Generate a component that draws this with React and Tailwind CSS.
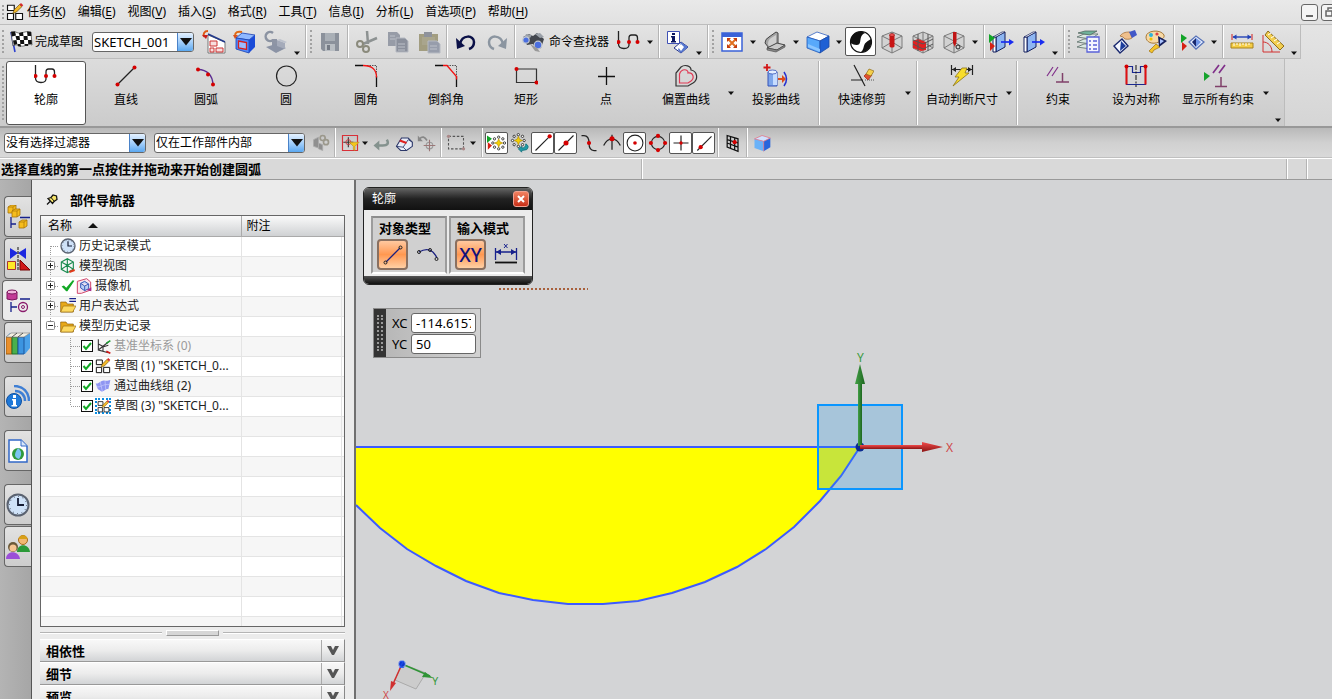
import React from "react";

/* ---------- icon primitives ---------- */

const Ico = ({ children, className = "size-6" }) => (
  <svg viewBox="0 0 24 24" className={className + " shrink-0"} fill="none" aria-hidden="true">
    {children}
  </svg>
);

const Dot = ({ x, y, r = 2, c = "#d40000" }) => <circle cx={x} cy={y} r={r} fill={c} />;

const Caret = () => <path d="M9 10.500h6l-3 3.500z" fill="#111" />;

const Flag = () => (
  <Ico>
    <path d="M2 2l4 20" stroke="#2a3fd0" strokeWidth="1.600" />
    <path d="M2 2c4-2 6 2 10 1s6-2 10-1l1 13c-4-2-7 2-11 1s-5-2-8 0z" fill="#fff" stroke="#222" strokeWidth=".6" />
    <path d="M2 2l4-.5 1 4-4 1zM10 3l4-1 .5 4h-4zM18 1.500l4 .5.3 4H18.500zM6.500 6l4-.3.5 4.300H7.500zM14.500 6h4l.3 4h-4zM4 10.500l3.500-.5.8 4-3.500 1zM11 10h4l.3 4h-4zM19 10h3.600l.3 4H19.200zM8.500 14l3-.2.5 3-3-.5zM15.500 14h3.500l.2 2-3.500-.2z" fill="#111" />
  </Ico>
);
const Orient = () => (
  <Ico>
    <path d="M6 5l17 7v11H6z" fill="#fff" stroke="#777" />
    <path d="M6 4l17 8" stroke="#223a8c" strokeWidth="1.500" />
    <path d="M8 11h7v5H8zM8 18h4v4H8zM14 18h7v4h-7z" stroke="#c33" fill="#f7dede" />
    <path d="M6 1C2 1 1 4 2 7" stroke="#e05a14" strokeWidth="2" />
    <path d="M0 5h6l-2 4z" fill="#c81e1e" />
  </Ico>
);
const BlueCube = () => (
  <Ico>
    <path d="M3 8l6-5 13 2-6 5z" fill="#8fb8ff" stroke="#1b3fae" strokeWidth=".8" />
    <path d="M3 8l13 2v13L3 19z" fill="#4f8bff" stroke="#1b3fae" strokeWidth=".8" />
    <path d="M16 10l6-5v12l-6 6z" fill="#1a4bd8" />
    <path d="M5.500 11l8 1.500v7l-8-1.500z" stroke="#d42020" strokeWidth="1.300" fill="#9bbcff" />
    <path d="M9 2C5 1 2 2 2 6" stroke="#e06a14" strokeWidth="2" />
    <path d="M0 5h5L2 9z" fill="#d8501e" />
  </Ico>
);
const GrayTool = () => (
  <Ico>
    <path d="M9 3a4.500 4.500 0 1 0 0 7" stroke="#8b93a2" strokeWidth="2.500" />
    <path d="M8 9h5v7H8z" fill="#8e95a5" />
    <path d="M2 17l10-3 10 4-10 5z" fill="#8b93a5" />
    <path d="M13 10l8 3v6l-8-3z" fill="#a5abba" />
    <path d="M13 10l3-1 7 3-2 1z" fill="#bcc1cc" />
  </Ico>
);
const Save = () => (
  <Ico>
    <path d="M3 3h18v18H5l-2-2z" fill="#8b919b" />
    <path d="M7 3h10v8H7z" fill="#a9afb6" />
    <path d="M7 14h10v7H7z" fill="#b9bec3" />
    <path d="M9 15h3v5H9z" fill="#757b85" />
  </Ico>
);
const Cut = () => (
  <Ico>
    <path d="M12 1l1 13M22 8L8 14" stroke="#8d9292" strokeWidth="2.500" />
    <circle cx="5" cy="14" r="3" stroke="#8a8a7c" strokeWidth="2" />
    <circle cx="11" cy="19" r="3" stroke="#8a8a7c" strokeWidth="2" />
  </Ico>
);
const Copy = () => (
  <Ico>
    <path d="M2 2h9l3 3v11H2z" fill="#979ca7" />
    <path d="M10 8h9l3 3v11H10z" fill="#8b909c" stroke="#b6bac2" />
    <path d="M4 6h5M4 9h5M12 14h7M12 17h7M12 20h7" stroke="#bdc1c9" />
  </Ico>
);
const Paste = () => (
  <Ico>
    <path d="M2 4h19v17H2z" fill="#a29d80" />
    <path d="M7 2h8v5H7z" fill="#8e929b" />
    <path d="M5 7h13v8H5z" fill="#a9a58d" />
    <path d="M11 11h9l3 3v9H11z" fill="#979dab" stroke="#b6bac2" />
    <path d="M13 16h7M13 19h7" stroke="#bdc1c9" />
  </Ico>
);
const Undo = () => (
  <Ico>
    <path d="M6 14C8 4 20 5 20 12c0 4-2 6-5 7" stroke="#0a1047" strokeWidth="2.500" />
    <path d="M2 8l1 11 8-3z" fill="#0a1047" />
  </Ico>
);
const Redo = () => (
  <Ico>
    <path d="M18 14C16 4 4 5 4 12c0 4 2 6 5 7" stroke="#8b95a0" strokeWidth="2.500" />
    <path d="M22 8l-1 11-8-3z" fill="#8b95a0" />
  </Ico>
);
const Binoculars = () => (
  <Ico>
    <path d="M2 7l6-3 4 2 4-3 7 6-3 9-5 2-3-6-6 1z" fill="#43474e" />
    <path d="M5 4l6 1-2 3-5-1zM14 4l5-1 4 4-4 1z" fill="#9aa0a8" />
    <circle cx="5" cy="10" r="3.200" fill="#4b6fe0" stroke="#c3c9d2" strokeWidth="1.200" />
    <circle cx="17" cy="15" r="3.800" fill="#4b6fe0" stroke="#c3c9d2" strokeWidth="1.200" />
    <path d="M9 14l5 7 5 1-3-4z" fill="#999" />
  </Ico>
);
const Profile = () => (
  <Ico>
    <path d="M1.500 1v13q0 4.500 5.500 4.500t5-4.500V8q0-3 2.500-3h3.500q2.500 0 2.500 3v4" stroke="#222" strokeWidth="1.300" />
    <Dot x="1.500" y="12" /><Dot x="12" y="12" /><Dot x="20.500" y="12" />
  </Ico>
);
const Info = () => (
  <Ico>
    <path d="M1.500 1.500h12v12h-12z" fill="#fff" stroke="#3f51b5" />
    <path d="M6 3h3v2H6zM5 6h4v5h1v1.500H5V11h1V7.500H5z" fill="#0b1660" />
    <path d="M8 18l7-6 7 5-7 6z" fill="#fff" stroke="#26348c" />
    <path d="M15 12l7 5-7 6-3-3z" fill="#5677cf" />
    <path d="M12 17l3-3 3 3-3 4z" fill="#fff" />
  </Ico>
);
const Fit = () => (
  <Ico>
    <path d="M2 3h20v18H2z" fill="#fff" stroke="#3a62d8" strokeWidth="1.500" />
    <path d="M2 3h20v4H2z" fill="#3a62d8" />
    <path d="M8 9l8 8M16 9l-8 8" stroke="#e07020" strokeWidth="2" />
    <path d="M7 8h4l-4 4zM17 8v4l-4-4zM7 18v-4l4 4zM17 18h-4l4-4z" fill="#c43c10" />
  </Ico>
);
const Plane = () => (
  <Ico>
    <path d="M2 13q0-4 4-6l7-5 2 1v11l-9 4z" fill="#a3a3a3" stroke="#444" />
    <path d="M5 14q0-4 3-6l5-3v9l-7 3z" fill="#cfcfcf" />
    <path d="M4 18l10-5 8 2-8 5z" fill="#c9c9c9" stroke="#444" />
    <path d="M4 18v2l9 2 9-5v-2l-8 5z" fill="#888" stroke="#444" strokeWidth=".6" />
  </Ico>
);
const Cube = () => (
  <Ico>
    <path d="M1 7l10-5 12 4-9 5z" fill="#fff" stroke="#3060c0" strokeWidth=".8" />
    <path d="M1 7l13 4v12L1 18z" fill="#58a9fb" stroke="#2458b8" strokeWidth=".8" />
    <path d="M14 11l9-5v11l-9 6z" fill="#1f60d4" stroke="#1c4aa4" strokeWidth=".8" />
    <path d="M2 14l12 5v3L2 17z" fill="#8cc6ff" />
  </Ico>
);
const Shade = () => (
  <Ico>
    <circle cx="12" cy="12" r="10.500" fill="#fff" stroke="#111" strokeWidth="1.200" />
    <path d="M13 1.500C5 1 1 7 1.500 13c2 1 4 2 6 2 5 0 3-5 5-9 1-2 3-3 4-3z" fill="#111" />
    <path d="M22 9c2 8-4 13.500-11 13.500 4-2 3-6 5-9 1.500-2 4-3 6-4.500z" fill="#111" />
  </Ico>
);
const Wire = ({ kind }) => (
  <Ico>
    <path d="M2 6l10-4 10 4v12l-10 5-10-5z" fill="#d2d2d2" stroke="#7c7c7c" />
    <path d="M2 6l10 5 10-5M12 11v12M12 2v9M2 18l10-6 10 6" stroke="#777" />
    {kind === "rod" && (
      <>
        <path d="M9.500 5v11c0 2 5 2 5 0V5z" fill="#c81414" />
        <ellipse cx="12" cy="5" rx="2.500" ry="1.500" fill="#f05050" stroke="#8e0c0c" strokeWidth=".6" />
      </>
    )}
    {kind === "grid" && (
      <>
        <path d="M2 11l5-2 8 3v8l-5 1-8-3z" fill="#e22020" />
        <path d="M7 4v17M17 4v17M2 10l10 4 10-5M2 14l10 5 10-5" stroke="#555" />
      </>
    )}
    {kind === "pin" && (
      <>
        <path d="M11 2h3.500v10l-1.500 5-2-4z" fill="#c01414" />
        <circle cx="16" cy="17" r="2" stroke="#222" />
      </>
    )}
  </Ico>
);
const Tris = ({ x = 0, y = 0 }) => (
  <>
    <path d={`M${x} ${y}l6 4-6 5z`} fill="#12a428" />
    <path d={`M${x + 1} ${y + 8}l5 4-5 5z`} fill="#d62015" />
  </>
);
const Door = ({ tris }) => (
  <Ico className="h-6 w-7">
    <path d="M5 7l9-5v15l-9 5z" fill="#8eb6f2" stroke="#111d5c" />
    <path d="M5 7H2v15h3z" fill="#fff" stroke="#111d5c" />
    <path d="M5 7l9-5h-3L2 7z" fill="#fff" stroke="#111d5c" strokeWidth=".7" />
    <path d="M10 12h10" stroke="#1a2df0" strokeWidth="1.700" />
    <path d="M18 9l5 3-5 3.500z" fill="#1a2df0" />
    {tris && <Tris x={-2} y={4} />}
  </Ico>
);
const Layers = () => (
  <Ico>
    <path d="M1 17l7-3h14l-7 5zM1 12l7-3h14l-7 5zM1 7l7-3h14l-7 5z" fill="#dbe8e2" stroke="#5b6d68" strokeWidth=".8" />
    <path d="M2 3l7-2h12l-7 4z" fill="#70b29a" stroke="#4a5b56" strokeWidth=".7" />
    <path d="M11 7h12v15H11z" fill="#f4f5ff" stroke="#5a62d8" strokeWidth="1.300" />
    <path d="M13 11h2M17 11h4M13 15h2M17 15h4M13 19h2M17 19h4" stroke="#5a62d8" strokeWidth="1.500" />
  </Ico>
);
const Hand = () => (
  <Ico>
    <path d="M1 16l8-7 6 7-8 7z" fill="#f4f7ff" stroke="#19286f" strokeWidth="1.400" />
    <path d="M8 11l5 5-6 5z" fill="#1b3d9c" />
    <path d="M7 6c3-4 7-4 10-4l2 6c-3 2-6 1-7 1l-2-2z" fill="#f0c08c" stroke="#a8743c" strokeWidth=".8" />
    <path d="M16 2l6-2 2 5-5 3z" fill="#4258c8" />
  </Ico>
);
const Palette = () => (
  <Ico>
    <path d="M2 7C2 0 17-1 20 5c1 4-4 4-5 7-7 3-13 0-13-5z" fill="#f7d9a6" stroke="#a87b3a" />
    <Dot x="7" y="5" c="#2fb2d8" /><Dot x="13" y="4" c="#e04040" r={1.600} /><Dot x="7" y="9" c="#f0c000" r={1.600} />
    <path d="M12 14l4 3-6 3-2 3-3-2 3-3z" fill="#f3c42a" stroke="#a87b1a" strokeWidth=".8" />
    <path d="M14 6l9 5-8 6z" fill="#16205e" />
    <path d="M16 9l4 2-4 3z" fill="#aac3ff" />
  </Ico>
);
const PlayDiamond = () => (
  <Ico>
    <Tris x={0} y={4} />
    <path d="M8 12l7-6 8 6-8 7z" fill="#e6eeff" stroke="#5873b8" strokeWidth="1.300" />
    <path d="M15 8v9l-4-5z" fill="#18286e" />
    <path d="M15 8l5 4-5 5z" fill="#6f95e8" />
  </Ico>
);
const Ruler = () => (
  <Ico>
    <path d="M1 13h22v5H1z" fill="#f4cd45" stroke="#a8821c" />
    <path d="M4 13v3M7 13v2M10 13v3M13 13v2M16 13v3M19 13v2" stroke="#fff" />
    <path d="M2 4v6M22 4v6" stroke="#d02020" />
    <path d="M3 7h18" stroke="#2343b8" strokeWidth="1.400" />
    <path d="M2.500 7l4-2.500v5zM21.500 7l-4-2.500v5z" fill="#2343b8" />
  </Ico>
);
const Angle = () => (
  <Ico>
    <path d="M2 5v17h17M2 12c5 0 9 4 9 10" stroke="#d23030" />
    <path d="M7 1l16 15-4 4L4 5z" fill="#f2ce50" stroke="#8e6d1a" />
    <path d="M7 5l3-2M10 8l3-2M13 11l3-2M16 14l3-2" stroke="#fff" />
  </Ico>
);

/* ribbon icons */
const Line = ({ c = "#222" }) => (
  <Ico><path d="M3.500 20.500L20.500 3.500" stroke={c} strokeWidth="1.200" /><Dot x="3.500" y="20.500" /><Dot x="20.500" y="3.500" /></Ico>
);
const Arc = () => (
  <Ico><path d="M4 5.500Q18 6 19 20.500" stroke="#5b2c91" strokeWidth="1.300" /><Dot x="4" y="5.500" /><Dot x="14" y="10.500" /><Dot x="19" y="20.500" /></Ico>
);
const CircleI = () => <Ico><circle cx="12.500" cy="12" r="10" stroke="#222" strokeWidth="1.200" /></Ico>;
const Fillet = () => (
  <Ico>
    <path d="M13 1.500h9.500v10" stroke="#555" strokeDasharray="1.500 1" />
    <path d="M1 1.500h8M22.500 12v11" stroke="#111" strokeWidth="1.300" />
    <path d="M9 1.500q13.500 0 13.500 12" stroke="#f21313" strokeWidth="1.300" />
  </Ico>
);
const Chamfer = () => (
  <Ico>
    <path d="M13 1.500h9.500v10" stroke="#555" strokeDasharray="1.500 1" />
    <path d="M1 1.500h8M22.500 12v11" stroke="#111" strokeWidth="1.300" />
    <path d="M9 1.500h4l9.500 11v3" stroke="#f21313" strokeWidth="1.300" />
  </Ico>
);
const RectI = () => (
  <Ico><path d="M2.500 5h20v13.500h-20z" stroke="#333" strokeWidth="1.200" /><Dot x="2.500" y="5" /><Dot x="22.500" y="18.500" /></Ico>
);
const Point = () => <Ico><path d="M12.500 3v18M4 12.500h17" stroke="#111" strokeWidth="1.300" /></Ico>;
const OffsetI = () => (
  <Ico>
    <path d="M2 22V9l5-6c4-3 10-1 10 3 6 1 8 9 2 13l-5 3z" stroke="#333" strokeWidth="1.200" />
    <path d="M5.500 19V10c2-6 9-5 8.500-1 5-1 7 5 3 8l-3 2z" stroke="#e03a55" strokeWidth="1.200" />
  </Ico>
);
const Project = () => (
  <Ico className="h-6 w-7">
    <path d="M3 0v7M-.5 3.500h7" stroke="#d21616" strokeWidth="1.800" />
    <path d="M4 8h9v14H4z" fill="#7ea6ea" stroke="#3553b8" />
    <path d="M9 7h4v14H9z" fill="#c6dcff" />
    <ellipse cx="8.500" cy="8" rx="4.500" ry="2" fill="#e4eeff" stroke="#3553b8" strokeWidth=".8" />
    <path d="M14 14h4v-3l4 4-4 4v-3h-4z" fill="#e04a1a" />
    <path d="M20 8q5 7 0 14" stroke="#2530d0" strokeWidth="1.500" />
  </Ico>
);
const Trim = () => (
  <Ico>
    <path d="M4 1l11 21M1 16h12" stroke="#222" strokeWidth="1.200" />
    <path d="M15 16h9" stroke="#555" strokeDasharray="1 1" />
    <path d="M14 12l4-4 4 3-4 5z" fill="#e05030" stroke="#a02010" strokeWidth=".7" />
    <path d="M16 10l3-5 5 2-3 5z" fill="#f4cf4c" stroke="#8e6d1a" strokeWidth=".7" />
  </Ico>
);
const Bolt = () => (
  <Ico>
    <path d="M1.500 1v10M22.500 1v10M2 5.500h20" stroke="#222" strokeWidth="1.200" />
    <path d="M2 5.500L6 3v5zM22 5.500L18 3v5z" fill="#222" />
    <path d="M12 4h5l-2 5h4L3 22l6-9H5z" fill="#f8dd2c" stroke="#8d7314" strokeWidth=".8" />
  </Ico>
);
const Constraint = () => (
  <Ico className="h-6 w-7">
    <path d="M1 12L7 3M6 12l6-9" stroke="#80308a" strokeWidth="1.200" />
    <path d="M16.500 9v9M10 18h13" stroke="#80406a" strokeWidth="1.500" />
  </Ico>
);
const Symmetric = () => (
  <Ico>
    <path d="M2.500 2.500v18h19v-18h-5v6h-8v-6z" stroke="#1a2890" strokeWidth="1.200" />
    <path d="M2.500 2.500v18M21.500 2.500v18" stroke="#e01010" strokeWidth="2" />
    <path d="M12 1v22" stroke="#111" strokeDasharray="5 1.500 2 1.500" />
    <Dot x="2.500" y="2.500" /><Dot x="21.500" y="2.500" />
  </Ico>
);
const ShowAll = () => (
  <Ico className="h-6 w-8">
    <path d="M-2 8l6 4-6 5z" fill="#16a32c" />
    <path d="M7 9l6-8M13 9l6-8" stroke="#80308a" strokeWidth="1.700" />
    <path d="M15 13v9M9 22.500h12" stroke="#80406a" strokeWidth="1.500" />
  </Ico>
);

/* selection bar icons */
const Links = () => (
  <Ico className="size-5">
    <path d="M3 8l6-3v13l-6-2zM9 12l5 2v7l-5-2z" fill="#8f8f8f" stroke="#aaa" />
    <circle cx="14" cy="6" r="3" stroke="#9b988c" strokeWidth="2" /><circle cx="18" cy="11" r="3" stroke="#9b988c" strokeWidth="2" />
  </Ico>
);
const SelFilter = () => (
  <Ico className="size-5">
    <path d="M3 3h18v18H3z" stroke="#d83038" strokeWidth="1.400" />
    <path d="M10 5v12M4 11h12" stroke="#333" strokeWidth="1.300" /><circle cx="10" cy="11" r="3" stroke="#d83038" />
    <path d="M11 11h12l-5 5v5l-2-1v-4z" fill="#f3c51c" stroke="#a8821c" strokeWidth=".6" />
  </Ico>
);
const Back = () => <Ico className="size-5"><path d="M19 8q4 7-5 7H9" stroke="#84928e" strokeWidth="3" /><path d="M10 9v12l-7-6z" fill="#84928e" /></Ico>;
const Eraser = () => (
  <Ico className="size-5">
    <path d="M3 16l6-10h8l5 5v5l-7 5H8z" fill="#e8ecf8" stroke="#2a3668" strokeWidth="1.300" /><path d="M3 16l8 1 6-9M11 17l4 4M17 8l5 3" stroke="#2a3668" /><path d="M7 9l8 3" stroke="#e02020" strokeWidth="2.500" />
  </Ico>
);
const RotPoint = () => (
  <Ico className="size-5"><path d="M3 7q5-5 9 2" stroke="#888" strokeWidth="2" /><path d="M1 3v7h6z" fill="#888" /><circle cx="15" cy="15" r="4" stroke="#999" strokeWidth="1.300" /><path d="M15 8v14M8 15h14" stroke="#9b7777" strokeWidth="1.300" /></Ico>
);
const Marquee = () => (
  <Ico className="size-5"><path d="M3 4h18v15H3z" stroke="#555" strokeWidth="1.300" strokeDasharray="3 2" /><Dot x="3" y="4" c="#a88" /><Dot x="21" y="19" c="#a88" /></Ico>
);
const SnapAll = ({ arrow }) => {
  const x = arrow ? 10 : 14;
  const y = arrow ? 9 : 12;
  return (
    <Ico className="size-5">
      {[[0, -7], [7, 0], [0, 7], [-7, 0], [5, -5], [5, 5], [-5, 5], [-5, -5]].map(([dx, dy]) => (
        <circle key={dx + "," + dy} cx={x + dx} cy={y + dy} r="1.400" fill="#fff" stroke="#222" />
      ))}
      <path d={`M${x} ${y - 5}l1.500 3.500L${x + 5} ${y}l-3.500 1.500L${x} ${y + 5}l-1.500-3.500L${x - 5} ${y}l3.500-1.500z`} fill="#f5d000" stroke="#a88400" strokeWidth=".7" />
      {arrow ? <path d="M19 13q5 3 1 7l-6 1v2l-4-4 4-3v2q5 0 5-5z" fill="#1f9ba8" stroke="#13727c" /> : <Tris x={0} y={3} />}
    </Ico>
  );
};
const Mid = () => <Ico className="size-5"><path d="M3 21L21 3" stroke="#222" strokeWidth="1.300" /><Dot x="12" y="12" r={3} /></Ico>;
const EndP = () => <Ico className="size-5"><path d="M3 21L20 4" stroke="#222" strokeWidth="1.300" /><Dot x="20" y="4" r={2.500} /></Ico>;
const OnCurve = () => <Ico className="size-5"><path d="M4 21L21 4" stroke="#222" strokeWidth="1.300" /><Dot x="8" y="17" r={2.500} /></Ico>;
const Pole = () => <Ico className="size-5"><path d="M3 3h3q6 0 6 9t6 9h3" stroke="#222" strokeWidth="1.500" /><Dot x="12" y="12" r={2.500} /></Ico>;
const Inter = () => <Ico className="size-5"><path d="M2 15q4-8 10-8t10 8M12 2v18" stroke="#222" strokeWidth="1.500" /><Dot x="12" y="7" r={3} /></Ico>;
const Center = () => <Ico className="size-5"><circle cx="12" cy="12" r="9.500" stroke="#222" strokeWidth="1.300" /><Dot x="12" y="12" r={2.200} /></Ico>;
const Quad = () => <Ico className="size-5"><circle cx="12" cy="12" r="8" stroke="#222" strokeWidth="1.300" /><Dot x="12" y="3.500" r={2.500} /><Dot x="12" y="20.500" r={2.500} /><Dot x="3.500" y="12" r={2.500} /><Dot x="20.500" y="12" r={2.500} /></Ico>;
const Exist = () => <Ico className="size-5"><path d="M12 3v18M3 12h18" stroke="#222" strokeWidth="1.400" /><Dot x="12" y="12" /></Ico>;
const GridI = () => <Ico className="size-5"><path d="M5 3l13 4v15L5 17zM9 4v15M14 6v15M5 8l13 4M5 12l13 5" stroke="#111" strokeWidth="1.500" /><Dot x="14" y="11" r={2.500} /></Ico>;
const Cube2 = () => (
  <Ico className="size-5">
    <path d="M3 7l9-4 10 3-8 4z" fill="#cfe2ff" /><path d="M3 7l11 3v12L3 18z" fill="#6ab2f8" /><path d="M14 10l8-4v11l-8 5z" fill="#2765dc" /><path d="M3 7l11 3 8-4M14 10v12M3 7l9-4 10 3" stroke="#e27b8c" />
  </Ico>
);

/* ---------- layout pieces ---------- */

const Sep = () => <span className="mx-[2px] box-content w-px shrink-0 self-stretch border-r border-white bg-[#b4b4b4]" />;
const Grip = () => <span className="my-[5px] ml-px w-1 shrink-0 self-stretch border-l-2 border-dotted border-[#a2a2a2]" />;
const Drop = ({ low, label = "更多", w = "w-3" }) => (
  <button aria-label={label} className={"flex shrink-0 justify-center " + w + (low ? " self-end pb-px" : " self-center")}>
    <svg viewBox="8 8 8 8" className="size-2 shrink-0" aria-hidden="true"><Caret /></svg>
  </button>
);
const Tool = ({ label, on, children }) => (
  <button
    aria-label={label}
    className={
      "flex w-[31px] shrink-0 items-center justify-center self-stretch " +
      (on ? "my-[2px] rounded-[2px] border border-[#555] bg-white" : "")
    }
  >
    {children}
  </button>
);
const Snap = ({ label, on, children }) => (
  <button
    aria-label={label}
    className={"flex h-[22px] w-[23px] shrink-0 items-center justify-center " + (on ? "rounded-[2px] border border-[#555] bg-white" : "")}
  >
    {children}
  </button>
);
const Pick = ({ label, value, className }) => (
  <span className={"flex shrink-0 overflow-hidden rounded-[3px] border border-[#666] bg-white " + className}>
    <select aria-label={label} defaultValue={value} className="min-w-0 flex-1 appearance-none bg-transparent pl-px outline-none">
      <option>{value}</option>
    </select>
    <span className="flex w-4 items-center justify-center border-l border-[#4a82c8] bg-linear-to-b from-[#e4f1ff] via-[#a6d0fa] to-[#5aa8f0]">
      <svg viewBox="0 0 12 8" className="h-2 w-3" aria-hidden="true"><path d="M0 0h12L6 7.500z" fill="#111" /></svg>
    </span>
  </span>
);
const Big = ({ label, on, w = "w-20", children }) => (
  <button
    className={
      "flex shrink-0 flex-col items-center gap-1 whitespace-nowrap pt-[2px] " + w +
      (on ? " rounded-[3px] border border-[#555] bg-white" : " border border-transparent")
    }
  >
    {children}
    <span>{label}</span>
  </button>
);

const menus = [
  ["任务", "K"], ["编辑", "E"], ["视图", "V"], ["插入", "S"], ["格式", "R"],
  ["工具", "T"], ["信息", "I"], ["分析", "L"], ["首选项", "P"], ["帮助", "H"],
];

function SketchPencil({ className }) {
  return (
    <Ico className={className}>
      <path d="M2 3h9v7H2zM2 14h8v8H2zM13 14h9v8h-9z" stroke="#111" strokeWidth="1.500" fill="#fff" />
      <path d="M9 14l2-5 7-7 3 3-7 7z" fill="#f4b92a" stroke="#553c00" strokeWidth=".8" />
      <path d="M18 2l2-2 3 3-2 2z" fill="#d62a2a" />
    </Ico>
  );
}

const MenuBar = () => (
  <nav className="flex h-6 items-center bg-linear-to-b from-[#e9e9e9] to-[#e1e1e1] pl-px">
    <Grip />
    <SketchPencil className="size-[18px]" />
    <ul className="ml-[3px] flex flex-1 gap-3">
      {menus.map(([t, k]) => (
        <li key={k}>
          <button className="whitespace-nowrap">
            {t}(<u className="underline-offset-2">{k}</u>)
          </button>
        </li>
      ))}
    </ul>
    <div className="-mr-[6px] flex gap-[3px]">
      <button aria-label="最小化" className="flex size-[17px] items-end justify-center rounded-[3px] border border-[#666] bg-[#f4f4f4] pb-[3px]">
        <span className="h-[2px] w-[7px] bg-[#666]" />
      </button>
      <button aria-label="还原" className="flex size-[17px] items-center justify-center rounded-[3px] border border-[#666] bg-[#f4f4f4]">
        <svg viewBox="0 0 12 12" className="size-3" fill="none" aria-hidden="true"><path d="M4 4V2h7v5H9M2 5h6v5H2z" stroke="#666" strokeWidth="1.500" /></svg>
      </button>
    </div>
  </nav>
);

const Toolbar = () => (
  <div className="flex h-[35px] border-t border-[#bdbdbd]">
    <div className="flex border-r border-b border-[#bcbcbc] bg-linear-to-b from-[#e4e4e4] to-[#d6d6d6] pl-px">
      <Grip />
      <button className="mr-[9px] ml-[3px] flex shrink-0 items-center gap-[2px] whitespace-nowrap"><Flag />完成草图</button>
      <Pick label="草图名" value="SKETCH_001" className="mr-1 h-5 w-[102px] self-center text-[13px]" />
      <Tool label="定向到草图"><Orient /></Tool>
      <Tool label="定向到模型"><BlueCube /></Tool>
      <Tool label="重新附着"><GrayTool /></Tool>
      <Drop low /><Sep /><Grip />
      <Tool label="保存"><Save /></Tool><Sep />
      <Tool label="剪切"><Cut /></Tool>
      <Tool label="复制"><Copy /></Tool>
      <Tool label="粘贴"><Paste /></Tool><Sep />
      <Tool label="撤消"><Undo /></Tool>
      <Tool label="重做"><Redo /></Tool><Sep />
      <button className="mr-1 ml-[3px] flex shrink-0 items-center gap-1 whitespace-nowrap"><Binoculars />命令查找器</button>
      <Tool label="轮廓"><Profile /></Tool>
      <Drop /><Sep />
      <Tool label="信息"><Info /></Tool>
      <Drop low /><Sep /><Grip />
      <Tool label="适合窗口"><Fit /></Tool><Drop />
      <Tool label="定向视图"><Plane /></Tool><Drop />
      <Tool label="着色"><Cube /></Tool><Drop />
      <Tool label="渲染样式" on><Shade /></Tool>
      <Tool label="编辑截面"><Wire kind="rod" /></Tool>
      <Tool label="工作截面"><Wire kind="grid" /></Tool>
      <Tool label="剪切截面"><Wire kind="pin" /></Tool>
      <Drop /><Sep />
      <Tool label="显示和隐藏"><Door tris /></Tool>
      <Tool label="隐藏"><Door /></Tool>
      <Drop low /><Sep /><Grip />
      <Tool label="图层设置"><Layers /></Tool><Sep />
      <Tool label="编辑对象显示"><Hand /></Tool>
      <Tool label="调色板"><Palette /></Tool><Sep />
      <Tool label="动画"><PlayDiamond /></Tool>
      <Drop /><Sep />
      <Tool label="测量距离"><Ruler /></Tool>
      <Tool label="测量角度"><Angle /></Tool>
      <Drop low />
    </div>
  </div>
);

const Ribbon = () => (
  <div className="flex h-[69px] border-b-2 border-[#989898]">
    <div className="flex border-r border-[#bcbcbc] bg-linear-to-b from-[#dcdcdc] to-[#cbcbcb] pt-[2px] pb-px pl-px">
      <Grip />
      <Big label="轮廓" on><Profile /></Big>
      <Big label="直线"><Line /></Big>
      <Big label="圆弧"><Arc /></Big>
      <Big label="圆"><CircleI /></Big>
      <Big label="圆角"><Fillet /></Big>
      <Big label="倒斜角"><Chamfer /></Big>
      <Big label="矩形"><RectI /></Big>
      <Big label="点"><Point /></Big>
      <Big label="偏置曲线"><OffsetI /></Big>
      <Drop w="w-[10px]" />
      <Big label="投影曲线"><Project /></Big><Sep />
      <Big label="快速修剪"><Trim /></Big><Drop /><Sep />
      <Big label="自动判断尺寸" w="w-21"><Bolt /></Big><Drop w="w-[10px]" /><Sep />
      <Big label="约束" w="w-19"><Constraint /></Big>
      <Big label="设为对称"><Symmetric /></Big>
      <Big label="显示所有约束" w="w-21"><ShowAll /></Big>
      <Drop />
      <Drop low />
    </div>
  </div>
);

const SelectionBar = () => (
  <div className="flex h-[30px] items-center border-b border-[#c0c0c0] bg-linear-to-b from-[#b9b9b9] via-[#d0d0d0] to-[#d9d9d9] pl-1">
    <Pick label="类型过滤器" value="没有选择过滤器" className="mr-2 h-5 w-[142px]" />
    <Pick label="选择范围" value="仅在工作部件内部" className="mr-1 h-5 w-[151px]" />
    <Snap label="选择链"><Links /></Snap><Sep />
    <Snap label="选择过滤"><SelFilter /></Snap><Drop w="w-2" />
    <Snap label="返回"><Back /></Snap>
    <Snap label="全不选"><Eraser /></Snap>
    <Snap label="旋转点"><RotPoint /></Snap><Sep />
    <Snap label="矩形选择"><Marquee /></Snap><Drop /><Sep />
    <Snap label="启用捕捉点" on><SnapAll /></Snap>
    <Snap label="清除捕捉点"><SnapAll arrow /></Snap>
    <Snap label="终点" on><EndP /></Snap>
    <Snap label="中点" on><Mid /></Snap>
    <Snap label="控制点"><Pole /></Snap>
    <Snap label="交点"><Inter /></Snap>
    <Snap label="圆弧中心" on><Center /></Snap>
    <Snap label="象限点"><Quad /></Snap>
    <Snap label="现有点" on><Exist /></Snap>
    <Snap label="点在曲线上" on><OnCurve /></Snap><Sep />
    <Snap label="栅格点"><GridI /></Snap><Sep />
    <Snap label="着色体"><Cube2 /></Snap>
  </div>
);

const StatusLine = () => (
  <div className="flex h-[22px] border-t border-b border-t-white border-b-[#999] bg-[#d9d9d9]">
    <p className="w-[642px] truncate border-r border-[#b4b4b4] pl-px text-[13px] leading-5 font-bold">选择直线的第一点按住并拖动来开始创建圆弧</p>
    <span className="flex-1 border-r border-l border-l-white border-r-[#b4b4b4]" />
    <span className="w-5 border-r border-l border-l-white border-r-[#b4b4b4]" />
    <span className="w-[25px] border-l border-white" />
  </div>
);

/* resource bar */
const Box3 = ({ x, y }) => (
  <>
    <path d={`M${x} ${y + 2}l3-2h5v6l-3 2h-5z`} fill="#f6bd1d" stroke="#a87408" strokeWidth=".8" />
    <path d={`M${x} ${y + 2}h5l3-2M${x + 5} ${y + 2}v6`} stroke="#a87408" strokeWidth=".7" />
  </>
);
const ClockFace = () => (
  <>
    <circle cx="12" cy="12" r="10.500" fill="#cfe2f8" stroke="#5a6270" strokeWidth="2" />
    <circle cx="12" cy="12" r="8.500" stroke="#303848" strokeDasharray=".8 3.650" />
    <path d="M12 5v7h6" stroke="#141c34" strokeWidth="1.800" />
  </>
);
const tabs = [
  ["装配导航器", <><Box3 x={2} y={0} /><Box3 x={6} y={4} /><path d="M5 12v11M5 19h5M14 12.500h10" stroke="#16208c" strokeWidth="1.300" /><Box3 x={13} y={15} /></>],
  ["约束导航器", <><path d="M4 1l8 5-8 6zM20 1l-8 5 8 6z" fill="#1c28e0" /><path d="M12 0v24" stroke="#111" strokeDasharray="3 1" /><path d="M1.500 14.500h8v8h-8z" fill="#ffe926" stroke="#a33" /><path d="M14 13v10h10z" fill="#d01818" stroke="#700" /></>],
  ["部件导航器", <><path d="M1 3v7q5 2 10 0V3z" fill="#c33b96" stroke="#7a165c" /><ellipse cx="6" cy="3" rx="5" ry="2" fill="#f0b8dc" stroke="#7a165c" /><path d="M5 13v10M5 18h6M14 10h10" stroke="#16208c" strokeWidth="1.300" /><circle cx="17" cy="18" r="4.500" stroke="#8a1c6c" strokeWidth="1.300" /><circle cx="17" cy="18" r="1.500" stroke="#8a1c6c" /></>],
  ["重用库", <><path d="M0 6l4-4h20v15l-5 6H0z" fill="#4aa0e8" /><path d="M0 6h6v17H0z" fill="#e98f2c" stroke="#9c5a0c" /><path d="M6 6h6v17H6z" fill="#49b04c" stroke="#22702a" /><path d="M12 6h6v17h-6z" fill="#3c94e0" stroke="#1c569c" /><path d="M0 6l5-4h19l-6 4z" fill="#f3efe2" stroke="#888" strokeWidth=".7" /><path d="M6 6l5-4M12 6l5-4" stroke="#555" /></>],
  ["浏览器", <><path d="M8 1c9 0 15 6 15 15M9 6c6 0 10 4 10 10" stroke="#3f7fd4" strokeWidth="2.500" /><circle cx="8" cy="16" r="7.500" fill="#1e78d8" stroke="#1050a0" /><path d="M7 10h3v3H7zM6 14h4v6h1v1.500H5.500V20H7v-4.500H6z" fill="#fff" /></>],
  ["网页", <><path d="M3 1h12l6 6v16H3z" fill="#fff" stroke="#3268c8" strokeWidth="1.500" /><path d="M15 1v6h6" fill="#d7e6fa" stroke="#3268c8" /><circle cx="12" cy="15" r="6" fill="#2f9a3c" /><path d="M12 9c4 3 4 7 1 11-4-1-6-4-1-11z" fill="#7cc4f2" /></>],
  ["历史记录", <ClockFace />],
  ["角色", <><circle cx="17" cy="5" r="4.500" fill="#f2b872" stroke="#a86c18" /><path d="M12.500 4c1-5 8-5 9 0z" fill="#d8a018" /><path d="M11 17c0-9 12-9 13 0z" fill="#2b9a38" /><circle cx="7" cy="12" r="5" fill="#6b5a3a" /><circle cx="7" cy="13" r="3.500" fill="#f6c592" /><path d="M0 24c0-9 13-9 14 0z" fill="#9b4fd8" /></>],
];

const ResourceBar = () => (
  <aside className="flex w-8 shrink-0 flex-col gap-px border-r border-[#555] bg-linear-to-r from-[#b4b4b4] to-[#a6a6a6] pt-4 pl-1">
    {tabs.map(([name, art], i) => (
      <button
        key={name}
        aria-label={name}
        className={
          "flex h-[41px] shrink-0 items-center justify-center rounded-l-[4px] border border-r-0 border-[#666] " +
          (i === 2 ? "-mr-px -ml-[2px] bg-[#ebebeb]" : "bg-linear-to-b from-[#e2e2e2] to-[#cdcdcd]") +
          (i > 3 && i < 7 ? " mt-3" : "")
        }
      >
        <Ico>{art}</Ico>
      </button>
    ))}
  </aside>
);

/* part navigator */
const Gutter = ({ box, first, last }) => (
  <svg viewBox="0 0 19 20" className="h-5 w-[19px] shrink-0" fill="none" aria-hidden="true">
    <path d={`M9.500 ${first ? 10 : 0}V${last ? 10 : 20}M10 10.500h8`} stroke="#999" strokeDasharray="1 1" />
    {box && (
      <>
        <rect x="5.500" y="5.500" width="8" height="8" rx="1" fill="#fff" stroke="#888" />
        <path d={box === "+" ? "M7 9.500h5M9.500 7v5" : "M7 9.500h5"} stroke="#222" />
      </>
    )}
  </svg>
);
const ChildGutter = ({ last }) => (
  <svg viewBox="0 0 40 20" className="h-5 w-10 shrink-0" fill="none" aria-hidden="true">
    <path d={`M29.500 0V${last ? 10 : 20}M30 10.500h9`} stroke="#999" strokeDasharray="1 1" />
  </svg>
);
const Folder = ({ eq }) => (
  <Ico className="size-4">
    <path d="M1 6h8l2 3h9v12H1z" fill="#e8a818" stroke="#8a5c08" />
    <path d="M5 12h19l-5 9H1z" fill="#fcd860" stroke="#9a6c10" />
    {eq && <path d="M14 1h10M14 5h10" stroke="#16208c" strokeWidth="1.800" />}
  </Ico>
);
const ViewI = () => <Ico className="size-4"><path d="M2 6l9-5 9 5v11l-9 5-9-5zM2 6l9 5 9-5M11 1v21M2 17l9-6 9 6" stroke="#1a8c50" strokeWidth="1.700" /><path d="M14 21l8-3" stroke="#e03a1a" strokeWidth="3" /></Ico>;
const CheckI = () => <Ico className="mx-px size-[14px]"><path d="M1 13l4-2 4 4L20 2l3 1-12 18H9z" fill="#12a825" /></Ico>;
const CamI = () => <Ico className="size-4"><path d="M2 5l14-4 6 5v12L8 23H2z" fill="#fbe6ee" stroke="#d0486c" strokeWidth="1.500" /><path d="M7 8l6-3 6 4v7l-6 3-6-4zM7 8l6 4 6-3M13 12v7" stroke="#3b5bb8" strokeWidth="1.500" fill="#bcd0f5" /><path d="M16 18l7-4v6z" fill="#a82c8c" /></Ico>;
const CsysI = () => <Ico className="size-4"><path d="M5 2v16l15 4M5 18L20 6M5 9l8 4 7-2M12 13v7" stroke="#333" strokeWidth="1.600" /><path d="M17 8l6-4" stroke="#1a9c30" strokeWidth="2.500" /><path d="M17 20l6 3" stroke="#d01818" strokeWidth="2.500" /></Ico>;
const SweepI = () => <Ico className="size-4"><path d="M1 8c5 2 8-6 14-4 4 1 5-1 8-1l-3 14c-5-2-6 5-11 3-3-3-4-2-5-4z" fill="#8f96f2" /><path d="M8 6l3 14M15 4l1 13M2 13c7 2 10-5 20-3" stroke="#c9cdfd" /></Ico>;
const ActiveSketch = () => (
  <span className="flex size-4 shrink-0 items-center justify-center border-2 border-dotted border-[#0a8ce0] bg-white"><SketchPencil className="size-[13px]" /></span>
);

const tree = [
  { t: "历史记录模式", g: <Gutter first />, i: <Ico className="size-4"><ClockFace /></Ico> },
  { t: "模型视图", g: <Gutter box="+" />, i: <ViewI /> },
  { t: "摄像机", g: <Gutter box="+" />, i: <><CheckI /><CamI /></> },
  { t: "用户表达式", g: <Gutter box="+" />, i: <Folder eq /> },
  { t: "模型历史记录", g: <Gutter box="-" last />, i: <Folder /> },
  { t: "基准坐标系 (0)", child: true, dim: true, i: <CsysI /> },
  { t: "草图 (1) \"SKETCH_0...", child: true, i: <SketchPencil className="size-4" /> },
  { t: "通过曲线组 (2)", child: true, i: <SweepI /> },
  { t: "草图 (3) \"SKETCH_0...", child: true, last: true, i: <ActiveSketch /> },
];
const rows = [...tree, ...Array.from({ length: 11 }, () => null)];

const Navigator = () => (
  <section className="flex w-[324px] shrink-0 flex-col border-r-2 border-[#707070] bg-[#ebebeb] pr-[9px] pl-2">
    <h2 className="flex h-[35px] shrink-0 items-center gap-3 pt-1 pl-[6px] text-[13px] font-bold">
      <Ico className="size-3"><path d="M2 21l6-6" stroke="#111" strokeWidth="2.500" /><path d="M4 9l9 10 3-4 6-4-1-7-7-2-4 5z" fill="#f5e36a" stroke="#111" strokeWidth="2.500" /><path d="M10 7l7 8" stroke="#111" strokeWidth="2" /></Ico>
      部件导航器
    </h2>
    <div className="min-h-0 flex-1 overflow-hidden border border-[#666] bg-white">
      <table className="w-full table-fixed border-collapse">
        <thead>
          <tr className="h-5 bg-linear-to-b from-[#fafafa] to-[#cfd1d3]">
            <th className="w-[200px] border-r border-b border-[#aaa] pl-[7px] text-left font-normal">
              <span className="flex items-center gap-4">名称
                <svg viewBox="0 0 10 5" className="h-[5px] w-[10px]" aria-hidden="true"><path d="M0 5h10L5 0z" fill="#111" /></svg>
              </span>
            </th>
            <th className="border-b border-[#aaa] pl-[5px] text-left font-normal">附注</th>
            <th className="w-[3px] border-b border-[#aaa]" aria-hidden="true" />
          </tr>
        </thead>
        <tbody>
          {rows.map((r, n) => (
            <tr key={n} className={n % 2 ? "bg-[#f6f6f6]" : "bg-white"}>
              <td className="h-5 border-r border-b border-[#e4e4e4] p-0">
                {r && (
                  <div className="flex h-[19px] items-center overflow-hidden whitespace-nowrap">
                    {r.child ? <ChildGutter last={r.last} /> : r.g}
                    {r.child && (
                      <span className="relative mr-[2px] flex size-3 shrink-0">
                        <input type="checkbox" defaultChecked aria-label={r.t} className="peer size-3 appearance-none border border-[#111] bg-white" />
                        <svg viewBox="0 0 12 12" className="pointer-events-none absolute inset-0 hidden size-3 peer-checked:block" fill="none" aria-hidden="true"><path d="M2.500 6l2.500 3 5-6" stroke="#12a825" strokeWidth="2" /></svg>
                      </span>
                    )}
                    {r.i}
                    <span className={"ml-[3px] " + (r.dim ? "text-[#9a9a9a]" : "text-[#222]")}>{r.t}</span>
                  </div>
                )}
              </td>
              <td className="border-r border-b border-[#e4e4e4]" />
              <td className="border-b border-[#e4e4e4]" />
            </tr>
          ))}
        </tbody>
      </table>
    </div>
    <div className="flex h-3 shrink-0 items-center gap-1" role="separator">
      <span className="h-[2px] flex-[121] border-b border-white bg-[#b4b4b4]" />
      <span className="h-[6px] w-[53px] border border-t-white border-r-[#999] border-b-[#999] border-l-white bg-[#d6d6d6]" />
      <span className="h-[2px] flex-[121] border-b border-white bg-[#b4b4b4]" />
    </div>
    <div className="h-15 shrink-0 overflow-hidden">
      {["相依性", "细节", "预览"].map((t) => (
        <button key={t} className="flex h-[23px] w-full items-stretch border-t border-r border-b border-t-white border-r-[#888] border-b-[#999] bg-linear-to-b from-[#f8f8f8] via-[#ececec] to-[#d2d4d6] text-left text-[13px] font-bold">
          <span className="flex-1 pl-[6px] leading-[22px]">{t}</span>
          <span className="flex w-[23px] items-center justify-center border-l border-[#aaa]">
            <svg viewBox="0 0 12 10" className="h-[10px] w-3" aria-hidden="true"><path d="M0 0h4l2 4 2-4h4L7 9H5z" fill="#555" /></svg>
          </span>
        </button>
      ))}
    </div>
  </section>
);

/* graphics window: scene coordinates are pixels from its top left corner */
const Scene = () => (
  <svg className="absolute inset-0 h-full w-full" fill="none" role="img" aria-label="草图视图">
    <defs>
      <linearGradient id="gy" x1="0" x2="1" y1="0" y2="0"><stop offset="0" stopColor="#43a047" /><stop offset="1" stopColor="#1c661f" /></linearGradient>
      <linearGradient id="gx" x1="0" x2="0" y1="0" y2="1"><stop offset="0" stopColor="#f24a4a" /><stop offset="1" stopColor="#8a1414" /></linearGradient>
    </defs>
    <path d="M0 267H504L485 296 464 321 438 347 410 369 381 387 349 402 316 413 282 421 247 424 212 424 177 420 143 413 110 401 80 386 51 369 24 348 0 325z" fill="#ff0" />
    <path d="M0 267H504L485 296 464 321 438 347 410 369 381 387 349 402 316 413 282 421 247 424 212 424 177 420 143 413 110 401 80 386 51 369 24 348 0 325" stroke="#3d5bff" strokeWidth="2" />
    <rect x="462" y="225" width="84" height="84" fill="#2299e8" fillOpacity=".25" stroke="#0a96ff" strokeWidth="2" />
    <circle cx="504" cy="267" r="4.500" fill="#0a2a90" />
    <path d="M502 201h4v65h-4z" fill="url(#gy)" />
    <path d="M504 184l5 20h-10z" fill="url(#gy)" />
    <path d="M504 265h65v4h-65z" fill="url(#gx)" />
    <path d="M587 267l-21-5v10z" fill="url(#gx)" />
    <text x="501" y="182" fontSize="12" fill="#3a9a3e" fontFamily="Noto Sans">Y</text>
    <text x="590" y="272" fontSize="12" fill="#d04848" fontFamily="Noto Sans">X</text>
    <path d="M143 109h89" stroke="#a8603c" strokeWidth="2" strokeDasharray="2 2" />
    <path d="M46 484l24 9-10 16-21-9z" fill="#ccc" stroke="#aaa" />
    <path d="M46 484l28 12" stroke="#2f9436" strokeWidth="1.500" /><path d="M77 498l-11-1 3-5z" fill="#2f9436" />
    <path d="M46 484l-9 20" stroke="#d03030" strokeWidth="1.500" /><path d="M34 511l1-10 5 2z" fill="#d03030" />
    <circle cx="46" cy="484" r="3.500" fill="#0f3ad0" stroke="#9ab0e8" />
    <text x="76" y="505" fontSize="11" fill="#3a9a3e" fontFamily="Noto Sans">Y</text>
    <text x="27" y="519" fontSize="10" fill="#d04848" fontFamily="Noto Sans">X</text>
    <text x="43" y="488" fontSize="9" fill="#2454f0" fontFamily="Noto Sans">Z</text>
  </svg>
);

const ModeBtn = ({ label, on, children }) => (
  <button
    aria-label={label}
    aria-pressed={!!on}
    className={
      "flex size-[31px] items-center justify-center rounded-[4px] border-2 " +
      (on ? "border-[#8a7060] bg-linear-to-b from-[#ffc9a0] via-[#ff9850] to-[#ffd0a4]" : "border-transparent")
    }
  >
    {children}
  </button>
);
const Group = ({ title, children }) => (
  <fieldset className="flex-1 border-2 border-t-[#8c8c8c] border-r-[#9c9c9c] border-b-white border-l-[#9c9c9c] bg-[#d0d0d0] pl-1">
    <div className="pl-[2px] text-[13px] leading-[21px] font-bold">{title}</div>
    <div className="flex gap-1">{children}</div>
  </fieldset>
);

const ProfileDialog = () => (
  <div role="dialog" aria-label="轮廓" className="absolute top-[7px] left-[7px] w-[170px] overflow-hidden rounded-[6px] border border-[#222] bg-[#ebebeb]">
    <div className="flex h-[22px] items-center justify-between bg-linear-to-b from-[#666] via-[#222] to-[#111] pr-[3px] pl-2 text-white">
      轮廓
      <button aria-label="关闭" className="flex size-4 items-center justify-center rounded-[3px] border border-[#f0a090] bg-linear-to-b from-[#f08060] to-[#c82c14]">
        <svg viewBox="0 0 8 8" className="size-2" aria-hidden="true"><path d="M1 1l6 6M7 1L1 7" stroke="#fff" strokeWidth="2" /></svg>
      </button>
    </div>
    <div className="flex h-[66px] gap-[2px] px-[7px] pt-[6px] pb-[2px]">
      <Group title="对象类型">
        <ModeBtn label="直线" on>
          <Ico><path d="M5 19L19 5" stroke="#1a2080" strokeWidth="1.300" /><circle cx="4.500" cy="19.500" r="1.500" stroke="#222" /><circle cx="19.500" cy="4.500" r="1.500" stroke="#222" /></Ico>
        </ModeBtn>
        <ModeBtn label="圆弧">
          <Ico><path d="M3 9q12-7 18 6" stroke="#1a2080" strokeWidth="1.300" /><circle cx="3" cy="9" r="1.500" stroke="#222" /><circle cx="14" cy="7" r="1.500" stroke="#222" /><circle cx="20.500" cy="16" r="1.500" stroke="#222" /></Ico>
        </ModeBtn>
      </Group>
      <Group title="输入模式">
        <ModeBtn label="坐标模式" on><span className="text-[19px] leading-6 font-medium text-[#10107c]">XY</span></ModeBtn>
        <ModeBtn label="参数模式">
          <Ico><path d="M1.500 5v12M22.500 5v12M2 9h20" stroke="#16208c" strokeWidth="1.300" /><path d="M2 9l5-3v6zM22 9l-5-3v6z" fill="#16208c" /><path d="M1 19.500h22" stroke="#111" strokeWidth="1.800" /><path d="M10 1l3.500 4M13.500 1L10 5" stroke="#16208c" /></Ico>
        </ModeBtn>
      </Group>
    </div>
    <div className="h-2 bg-linear-to-b from-[#555] to-[#111]" />
  </div>
);

const CoordPanel = () => (
  <div className="absolute top-[128px] left-[17px] flex h-[50px] w-[108px] border border-[#8a8a8a] bg-linear-to-r from-[#b4b4b4] to-[#d2d2d2]">
    <span className="flex w-3 justify-center gap-[2px] bg-[#333] py-[6px]">
      <i className="border-l-2 border-dotted border-[#999]" /><i className="border-l-2 border-dotted border-[#999]" />
    </span>
    <div className="flex flex-1 flex-col justify-center gap-px pr-1 pl-[6px] text-[13px]">
      {[["XC", "-114.6157"], ["YC", "50"]].map(([k, v]) => (
        <label key={k} className="flex items-center justify-between">
          {k}
          <input defaultValue={v} className="h-5 w-[65px] rounded-[3px] border border-[#666] bg-white px-1 outline-none" />
        </label>
      ))}
    </div>
  </div>
);

export default function App() {
  return (
    <div className="flex h-screen flex-col overflow-hidden bg-[#d3d4d6] font-['Noto_Sans','Noto_Sans_CJK_SC',sans-serif] text-[12px] leading-4 text-black">
      <header className="shrink-0 bg-linear-to-b from-[#e8e8e8] to-[#cdcdcd]">
        <MenuBar />
        <Toolbar />
        <Ribbon />
        <SelectionBar />
        <StatusLine />
      </header>
      <main className="flex min-h-0 flex-1">
        <ResourceBar />
        <Navigator />
        <div className="relative min-w-0 flex-1 overflow-hidden bg-[#d3d4d6]">
          <Scene />
          <ProfileDialog />
          <CoordPanel />
        </div>
      </main>
    </div>
  );
}
